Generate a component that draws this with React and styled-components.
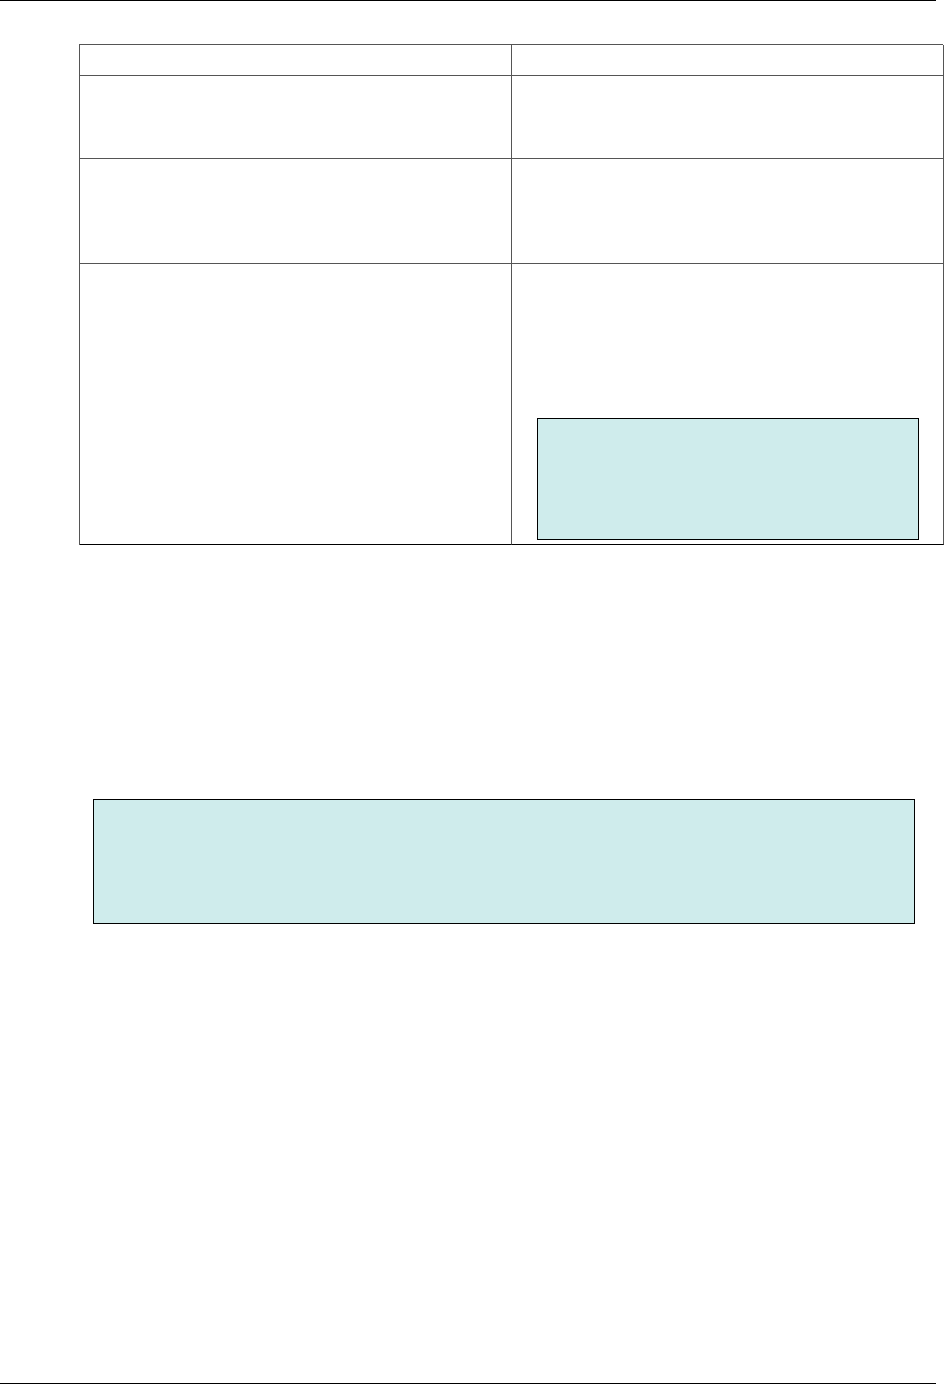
import React from 'react';
import styled, { createGlobalStyle } from 'styled-components';

const GlobalStyle = createGlobalStyle`
  body {
    margin: 0;
    background: #ffffff;
    font-family: "Liberation Sans", Arial, sans-serif;
  }
`;

const Page = styled.div`
  width: 944px;
  min-height: 1384px;
  display: flex;
  flex-direction: column;
  box-sizing: border-box;
`;

const Rule = styled.div`
  width: 936px;
  height: 0;
  border-top: 1px solid #000;
  margin-top: ${p => p.$top || 0}px;
`;

const Table = styled.div`
  margin: 43px 0 0 79px;
  width: 864px;
  display: grid;
  grid-template-columns: 432px 432px;
  grid-template-rows: 31px 83px 105px 281px;
  border-top: 1px solid #555;
  border-left: 1px solid #555;
  box-sizing: border-box;
`;

const Cell = styled.div`
  border-right: 1px solid #555;
  border-bottom: 1px solid ${p => (p.$last ? '#000' : '#555')};
  box-sizing: border-box;
  display: flex;
  flex-direction: column;
  justify-content: flex-end;
  padding: ${p => (p.$boxed ? '0 24px 4px 25px' : '0')};
`;

const NoteBox = styled.div`
  background: #cfecec;
  border: 1px solid #000;
  box-sizing: border-box;
  height: ${p => p.$h}px;
  width: ${p => (p.$w ? `${p.$w}px` : 'auto')};
  margin-left: ${p => p.$left || 0}px;
  margin-top: ${p => p.$top || 0}px;
`;

export default function App() {
  return (
    <>
      <GlobalStyle />
      <Page>
        <Rule />
        <Table>
          <Cell />
          <Cell />
          <Cell />
          <Cell />
          <Cell />
          <Cell />
          <Cell $last />
          <Cell $last $boxed>
            <NoteBox $h={122} />
          </Cell>
        </Table>
        <NoteBox $h={125} $w={822} $left={93} $top={254} />
        <div style={{ flex: 1 }} />
        <Rule />
      </Page>
    </>
  );
}
